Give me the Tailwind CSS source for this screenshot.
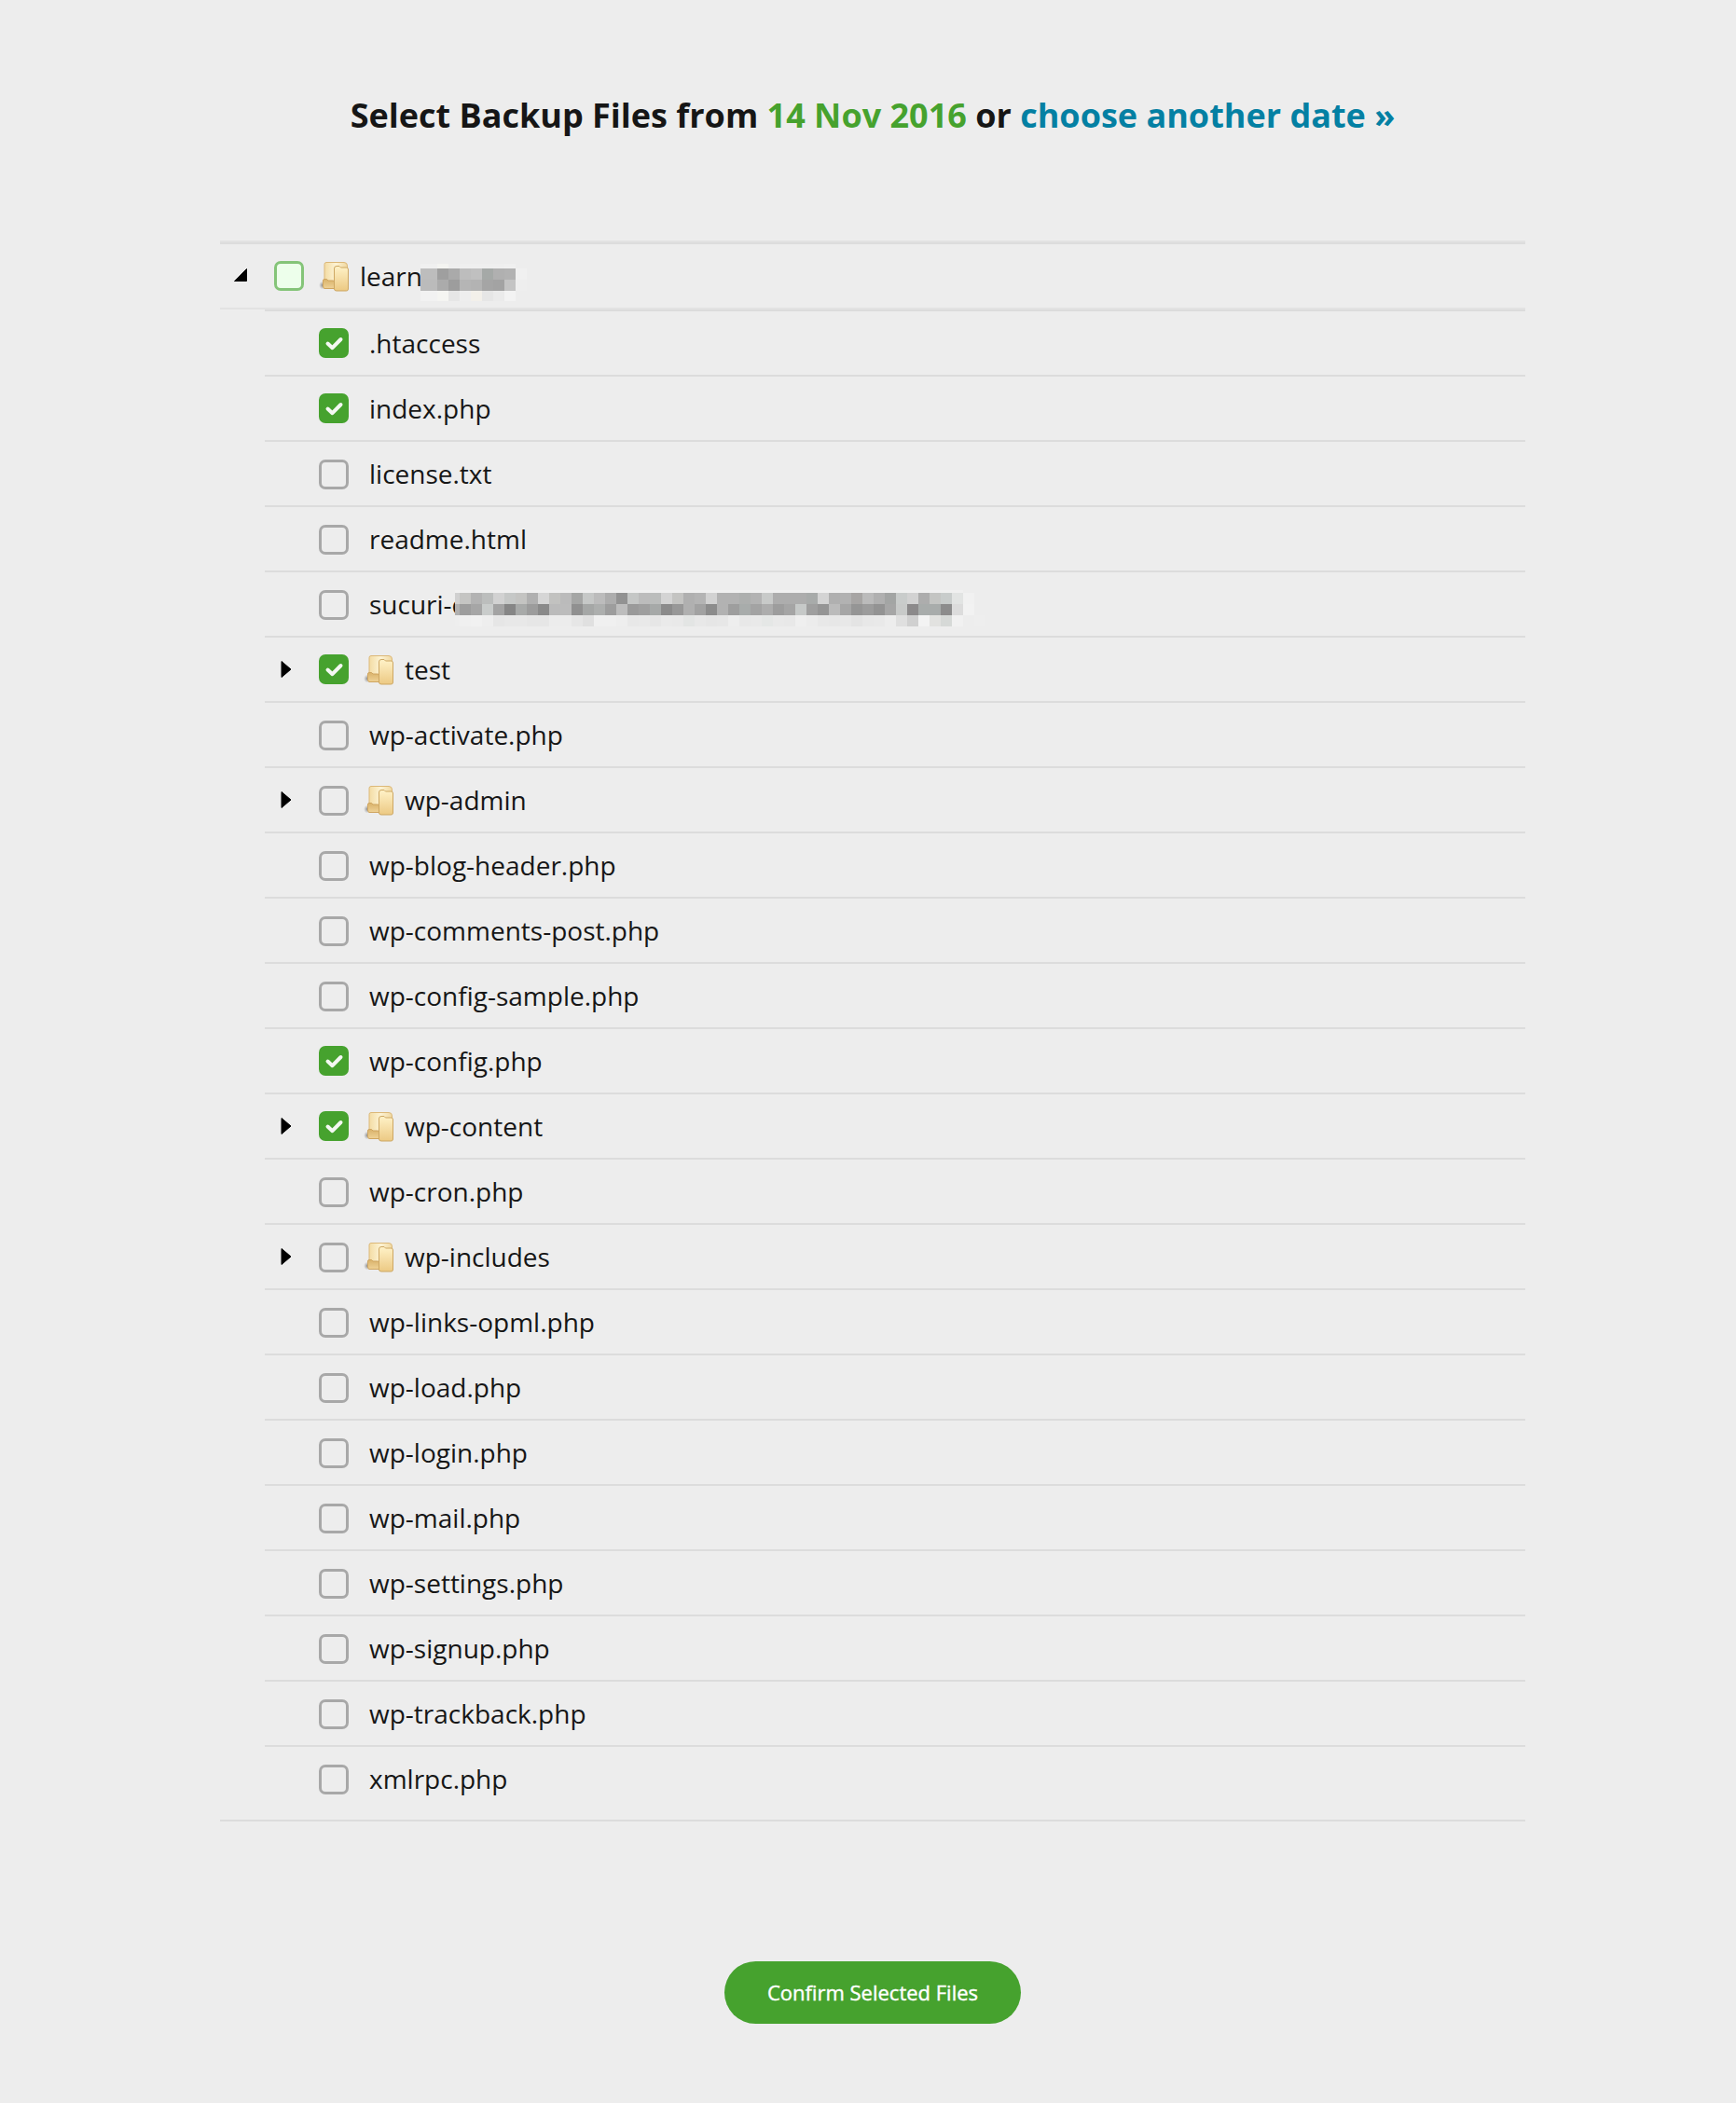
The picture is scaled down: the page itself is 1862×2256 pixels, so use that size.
<!DOCTYPE html>
<html lang="en">
<head>
<meta charset="utf-8">
<title>Select Backup Files</title>
<script src="https://cdn.jsdelivr.net/npm/@tailwindcss/browser@4"></script>
</head>
<body class="bg-[#ededed] text-[#161616] font-['Open_Sans',sans-serif] overflow-hidden">
<svg class="absolute size-0">
  <defs>
    <linearGradient id="fold" x1="0" y1="0" x2="0" y2="1"><stop offset="0" stop-color="#fff2c8"/><stop offset="1" stop-color="#ecc983"/></linearGradient>
    <linearGradient id="back" x1="0" y1="0" x2="1" y2="0"><stop offset="0" stop-color="#f3dca4"/><stop offset=".5" stop-color="#fdf3d4"/><stop offset="1" stop-color="#f0d8a0"/></linearGradient>
    <linearGradient id="lip" x1="0" y1="0" x2="0" y2="1"><stop offset="0" stop-color="#d9b26a"/><stop offset="1" stop-color="#efd296"/></linearGradient>
    <radialGradient id="shade"><stop offset="0" stop-color="#777" stop-opacity=".85"/><stop offset="1" stop-color="#999" stop-opacity="0"/></radialGradient>
    <symbol id="folder" viewBox="0 0 33 33">
      <ellipse cx="4" cy="26" rx="4" ry="4.5" fill="url(#shade)"/>
      <path d="M6 3.500Q6 1.500 8 1.500H27Q30.500 1.500 30.500 5V29H6Z" fill="url(#back)" stroke="#dcb878"/>
      <path d="M4.500 21Q4.500 19.500 6 19.500H8.500L10 21H15Q17 21 17 23V29.500H6Q4.500 29 4.500 27Z" fill="url(#lip)" stroke="#cfa560"/>
      <path d="M16.500 8Q16.500 5.500 19 5.500H22L23.500 7H29.500Q31.500 7 31.500 9V30Q31.500 32 29.500 32H19Q16.500 32 16.500 30Z" fill="url(#fold)" stroke="#cda763"/>
    </symbol>
  </defs>
</svg>
<main class="ml-[236px] w-[1400px] h-[2256px]">
  <h1 class="pt-[99px] text-[36px] leading-[49px] font-bold text-center whitespace-nowrap">Select Backup Files from <span class="text-[#46a22e]">14 Nov 2016</span> or <a class="text-[#0480a3]">choose another date »</a></h1>
  <section class="mt-[110px] border-t-2 border-[#e2e2e2] text-[28px] leading-[38px]">
    <div class="relative flex items-center h-[72px] border-t-2 border-t-[#dcdcdc] border-b-2 border-b-[#e2e2e2]">
      <svg class="w-[16px] h-[16px] ml-[14px] mb-[3px]" viewBox="0 0 16 16"><path d="M14.500 1.500V14.500H1.500Z" fill="#000" stroke="#000" stroke-linejoin="round"/></svg>
      <span class="ml-[28px] size-8 rounded-[7px] border-3 border-[#84c478] bg-[#edffeb]"></span>
      <svg class="ml-[16px] size-[33px]"><use href="#folder"/></svg>
      <span class="ml-[11px]">learn</span>
      <svg id="maskRoot" class="absolute left-[215px] top-[21px]" width="126" height="42" shape-rendering="crispEdges"></svg>
    </div>
    <ul id="files" class="ml-12"></ul>
    <div class="border-t-2 border-[#dcdcdc] mt-[10px]"></div>
  </section>
  <div class="flex justify-center mt-[150px]">
    <button class="w-[318px] h-[67px] pb-[2px] rounded-full bg-[#46a22e] text-white text-[22px] leading-[30px] [-webkit-text-stroke:0.4px_white] whitespace-nowrap">Confirm Selected Files</button>
  </div>
</main>
<script>
const files = [
  ['.htaccess',1],['index.php',1],['license.txt'],['readme.html'],['sucuri-c',0,0,1],['test',1,1],
  ['wp-activate.php'],['wp-admin',0,1],['wp-blog-header.php'],['wp-comments-post.php'],['wp-config-sample.php'],
  ['wp-config.php',1],['wp-content',1,1],['wp-cron.php'],['wp-includes',0,1],['wp-links-opml.php'],['wp-load.php'],
  ['wp-login.php'],['wp-mail.php'],['wp-settings.php'],['wp-signup.php'],['wp-trackback.php'],['xmlrpc.php']
];
const on = '<span class="size-8 rounded-[7px] bg-[#46a22e] shrink-0"><svg class="size-8" viewBox="0 0 32 32"><path d="M9.500 16.500L14.500 21.200L23.500 12" fill="none" stroke="#f4f8f2" stroke-width="4" stroke-linecap="round" stroke-linejoin="round"/></svg></span>';
const off = '<svg class="size-8 mt-px shrink-0" viewBox="0 0 32 32"><rect x="1.500" y="1.500" width="29" height="29" rx="5.500" fill="none" stroke="#a8a8a8" stroke-width="3"/></svg>';
const arrow = '<svg class="w-[12px] h-[20px]" viewBox="0 0 12 20"><path d="M1 1.500V18.500L11 10Z" fill="#000" stroke="#000" stroke-linejoin="round"/></svg>';
document.getElementById('files').innerHTML = files.map(([name, checked, dir, masked]) =>
  `<li class="relative flex items-center h-[70px] border-t-2 border-[#dcdcdc]"><span class="w-[58px] pl-[17px]">${dir ? arrow : ''}</span>${checked ? on : off}${dir ? '<svg class="ml-[16px] size-[33px]"><use href="#folder"/></svg>' : ''}<span class="${dir ? 'ml-[11px]' : 'ml-[22px]'}">${name}</span>${masked ? '<svg id="maskFile" class="absolute left-[204px] top-[19px]" width="570" height="42" shape-rendering="crispEdges"></svg>' : ''}</li>`).join('');

// Mosaic over redacted names: each row is [y, height, first tile width, colours of 12px tiles]
function mosaic(id, rows) {
  document.getElementById(id).innerHTML = rows.map(([y, h, first, list]) => list.split(' ').map((c, i) =>
    `<rect x="${i ? first + (i - 1) * 12 : 0}" y="${y}" width="${i ? 12 : first}" height="${h}" fill="#${c}"/>`).join('')).join('');
}
mosaic('maskRoot', [
  [0,5,18,'f0f0f0 f4f4f1 eeeeee efefef efefef efefef efefef f0f0f0'],
  [5,12,18,'bdbdbd 9f9f9f aaaaaa bdbdbd c0c0c0 a5a9a7 b0b0b0 b2b2b2 f0f0f0'],
  [17,12,18,'bbbbbb ababab 9d9d9d b5b5b5 b3b3b3 a5a5a5 a3a3a3 c4c4c4 eeeeee'],
  [29,11,18,'f2f2f2 f5f5f2 e6e6e6 eeeeee f3f0ea e6e6e6 ebebeb f3f3f3']
]);
mosaic('maskFile', [
  [0,3,5,Array(46).fill('f0f0f0').join(' ')],
  [3,12,5,'d0d0d0 c5c5c3 b3b3b3 bcbebd d2d2d2 c6c8c7 c4c4c2 b0b0b0 d6d6d6 c2c2c0 bbbbbb a5a6a5 c6c8c7 bcbcbc adadad 929292 c5c7c6 bcbcbc bbbdbc d4d4d4 c4c4c2 b0b0b0 b4b4b4 d2d2d2 b2b2b2 b2b2b2 adafae b3b3b3 c8cac9 adadad adadad adadad a8abaa d4d4d4 b0b0b0 b2b2b2 a7a5a4 bbbbbb b0b0b0 a3a5a4 c9cccb d2d2d2 adadad c4c5c3 c8cccb e2e4e3 f1f1f1'],
  [15,12,5,'b0b0b0 9d9d9d a6a6a6 c9cccb a3a3a3 868686 a8aaa9 9c9c9c 8a8a8a bbbbbb bcbcbc 909090 a5a7a6 adafae 9d9d9d bdbdbd 9a9a9a 9f9f9f a6a9a8 8b8b8b 989898 b0b0b0 a2a2a2 8c8c8c b2b2b2 9e9e9e a8acab a3a3a3 adadad 9d9d9d a5a5a5 c6c9c8 9f9f9f 959595 bbbbbb a6a6a6 959595 9c9c9c 939393 a6a6a6 c8cac9 8c8a8b a8acab a8acab 8c8c8c dcdcdc f2f2f2'],
  [27,12,5,'eeeeee f0f0f0 f1f1f1 eeeeee e6e6e6 e8e8e8 e8e8e8 e6e6e6 e6e6e6 ececec ececec e6e6e6 e0e0e0 f0f0f0 f0f0f0 eeeeee e8e8e8 e9e9e9 e6e6e6 eaeaea e9e9e9 e3e5e4 e8e8e8 e6e6e6 e7e7e7 eeeeee e8e8e8 e9e9e9 e5e7e6 e9e9e9 e8e8e8 efefef ececec e8e8e8 e7e7e7 e8e8e8 e4e4e4 e8e8e8 e9e9e9 ededed dfdfdf d0d0d0 f3f3f3 e2e2e0 d6d9d7 f1f1f1 ededed eeeeee']
]);
</script>
</body>
</html>
